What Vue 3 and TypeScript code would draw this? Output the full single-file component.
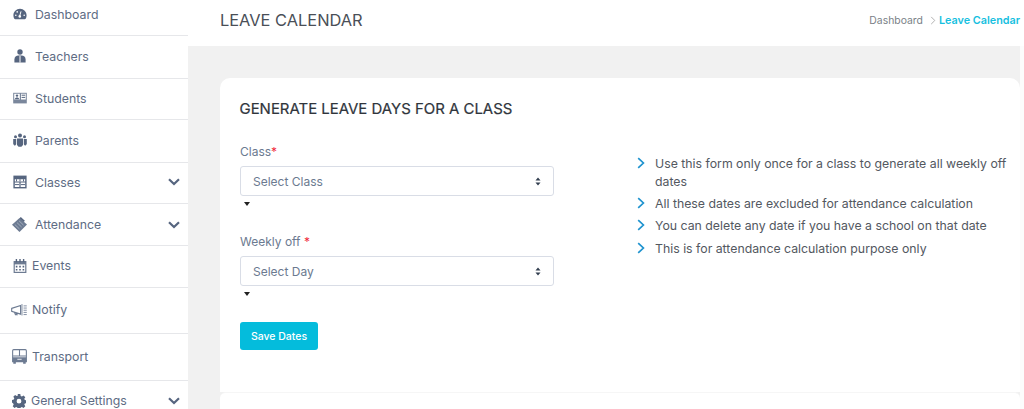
<script setup lang="ts">
interface NavItem { label: string; icon: string; h: number; size: number; left: number; gap: number; pb: number; chevron?: boolean }
const nav: NavItem[] = [
  { label: 'Dashboard', icon: 'gauge', h: 36, size: 14, left: 13, gap: 8, pb: 7 },
  { label: 'Teachers', icon: 'teacher', h: 43, size: 14, left: 13, gap: 8, pb: 2 },
  { label: 'Students', icon: 'card', h: 41, size: 14, left: 13, gap: 8, pb: 2 },
  { label: 'Parents', icon: 'users', h: 43, size: 14, left: 13, gap: 8, pb: 2 },
  { label: 'Classes', icon: 'table', h: 41, size: 14, left: 13, gap: 8, pb: 2, chevron: true },
  { label: 'Attendance', icon: 'tag', h: 42, size: 15, left: 12, gap: 8, pb: 0, chevron: true },
  { label: 'Events', icon: 'calendar', h: 42, size: 14, left: 13, gap: 5, pb: 2 },
  { label: 'Notify', icon: 'horn', h: 46, size: 16, left: 11, gap: 5, pb: 2 },
  { label: 'Transport', icon: 'bus', h: 47, size: 15, left: 12, gap: 5, pb: 2 },
  { label: 'General Settings', icon: 'gear', h: 42, size: 14, left: 12, gap: 5, pb: 2, chevron: true },
]
const notes = [
  'Use this form only once for a class to generate all weekly off dates',
  'All these dates are excluded for attendance calculation',
  'You can delete any date if you have a school on that date',
  'This is for attendance calculation purpose only',
]
</script>

<template>
  <div class="page">
    <aside class="sidebar">
      <div
        v-for="item in nav"
        :key="item.label"
        class="nav-row"
        :style="{ height: item.h + 'px', paddingLeft: item.left + 'px', paddingBottom: item.pb + 'px', gap: item.gap + 'px' }"
      >
        <svg class="nav-icon" :style="{ width: item.size + 'px', height: item.size + 'px' }" viewBox="0 0 14 14" fill="#56657f">
          <template v-if="item.icon === 'gauge'">
            <path d="M7 1.8C3.3 1.8.4 4.8.4 8.4c0 1.2.3 2.3.9 3.3.2.3.5.5.9.5h9.6c.4 0 .7-.2.9-.5.6-1 .9-2.1.9-3.3 0-3.6-2.9-6.6-6.6-6.6z" />
            <path d="M8 4.4 6.8 8.6" stroke="#fff" stroke-width="1" />
            <circle cx="6.8" cy="9.4" r="1.3" fill="#fff" />
            <circle cx="2.8" cy="8.2" r=".8" fill="#fff" /><circle cx="4.2" cy="4.9" r=".8" fill="#fff" /><circle cx="11.2" cy="8.2" r=".8" fill="#fff" />
          </template>
          <template v-else-if="item.icon === 'teacher'">
            <circle cx="7" cy="3" r="2.7" />
            <path d="M1.4 13.6v-3C1.4 8.2 3.2 6.6 5.4 6.6h3.2c2.2 0 4 1.6 4 4v3z" />
            <path d="M7 7v6.6" stroke="#fff" stroke-width="1" />
          </template>
          <template v-else-if="item.icon === 'card'">
            <path d="M.2 1.8h13.6v10.6H.2z" fill="#7a879c" />
            <path d="M1.2 2.8h5.6v5.6H1.2zM8 2.8h4.8v5.6H8z" fill="#fff" />
            <circle cx="4" cy="4.6" r="1.2" /><path d="M1.8 8.2c0-2.4 4.4-2.4 4.4 0z" />
            <path d="M8.6 4.2h3.6M8.6 6.4h3.6" stroke="#56657f" stroke-width="1" />
          </template>
          <template v-else-if="item.icon === 'users'">
            <circle cx="7" cy="2.6" r="2" /><circle cx="2.5" cy="3.8" r="1.5" /><circle cx="11.5" cy="3.8" r="1.5" />
            <path d="M4 5.6h6v6.4l-1.6 1.8H5.6L4 12z" />
            <path d="M.2 6h3v5.2l-1 1.2h-.9L.2 11zM10.8 6h3v5l-1.1 1.4h-.9l-1-1.2z" />
          </template>
          <template v-else-if="item.icon === 'table'">
            <path d="M.4.6h13.2v12.8H.4z" />
            <path d="M1.8 4.2h10.4v2.2H1.8zM1.8 7.6h4.6v4.4H1.8zM7.6 7.6h4.6v4.4H7.6z" fill="#fff" />
            <path d="M2 9.6h4.2M7.8 9.6H12" stroke="#56657f" stroke-width="1" />
            <path d="M3.5 4.2v2.2M7 4.2v2.2M10.5 4.2v2.2" stroke="#56657f" stroke-width="1" />
          </template>
          <template v-else-if="item.icon === 'tag'">
            <path d="M0 7.2 7 .9l7 6.2-7 6.9z" fill="#6d7b92" />
            <path d="M8.2 0l3.8 3.4-1.1 1.2L7 1.2z" fill="#56657f" />
            <path d="M2.6 7l4.4 4.2M4.6 5.2 9 9.4M6.6 3.6l4.2 4" stroke="#b4bdca" stroke-width=".7" />
          </template>
          <template v-else-if="item.icon === 'calendar'">
            <path d="M.6 2h12.8v12H.6z" fill="#6d7b92" />
            <path d="M1.8 5.4h10.4v7.4H1.8z" fill="#fff" />
            <path d="M3.4 0v3.2M7 0v3.2M10.6 0v3.2" stroke="#56657f" stroke-width="1.4" />
            <path d="M2.8 6.8h1.6v1.6H2.8zM6.2 6.8h1.6v1.6H6.2zM9.6 6.8h1.6v1.6H9.6zM2.8 10h1.6v1.6H2.8zM6.2 10h1.6v1.6H6.2zM9.6 10h1.6v1.6H9.6z" />
          </template>
          <template v-else-if="item.icon === 'horn'">
            <path d="M.6 5.6 8.4 3v7.6L.6 8.2zM3 8.8l.9 2.4h1.4L4.6 9.4" fill="none" stroke="#6d7b92" stroke-width="1" />
            <path d="M9.6 1.8v10M11 3.4h2.8M11 5.3h2.8M11 7.2h2.8M11 9.1h2.8M11 11h2.8" stroke="#7a879c" stroke-width=".8" fill="none" />
          </template>
          <template v-else-if="item.icon === 'bus'">
            <path d="M1.6.6h10.8c.6 0 1 .4 1 1v10.2H.6V1.6c0-.6.4-1 1-1z" fill="none" stroke="#6d7b92" stroke-width="1" />
            <path d="M7 1v5.6M1 6.6h12" stroke="#6d7b92" stroke-width="1" />
            <path d="M.6 7.6h12.8v4.2H.6zM1.2 11.8h2.4v2H1.2zM10.4 11.8h2.4v2h-2.4z" fill="#6d7b92" />
            <path d="M5 9.6h4" stroke="#fff" stroke-width=".8" />
          </template>
          <template v-else-if="item.icon === 'gear'">
            <path fill-rule="evenodd" d="M5.7 0h2.6l.4 1.9 1.2.5 1.6-1 1.8 1.8-1 1.6.5 1.2 1.9.4v2.6l-1.9.4-.5 1.2 1 1.6-1.8 1.8-1.6-1-1.2.5-.4 1.9H5.7l-.4-1.9-1.2-.5-1.6 1-1.8-1.8 1-1.6-.5-1.2L-.1 8.5V5.9l1.9-.4.5-1.2-1-1.6 1.8-1.8 1.6 1 1.2-.5zM7 4.8a2.4 2.4 0 1 0 0 4.8 2.4 2.4 0 0 0 0-4.8z" />
          </template>
        </svg>
        <span class="nav-label">{{ item.label }}</span>
        <svg v-if="item.chevron" class="chev" viewBox="0 0 12 8" fill="none" stroke="#56657f" stroke-width="2.2">
          <path d="M1 1.2 6 6l5-4.8" />
        </svg>
      </div>
    </aside>

    <main class="main">
      <header class="topbar">
        <h1 class="title">LEAVE CALENDAR</h1>
        <nav class="crumbs">
          <span>Dashboard</span>
          <svg class="crumb-sep" viewBox="0 0 6 10" fill="none" stroke="#a8a8a8" stroke-width="1"><path d="M1 1l4 4-4 4" /></svg>
          <b>Leave Calendar</b>
        </nav>
      </header>

      <div class="content">
        <section class="card">
          <h2 class="card-title">GENERATE LEAVE DAYS FOR A CLASS</h2>
          <div class="columns">
            <form class="form" @submit.prevent>
              <label class="field-label">Class<em>*</em></label>
              <div class="select">
                <span>Select Class</span>
                <svg class="updown" viewBox="0 0 6 10" fill="#333f50"><path d="M3 .5 5.8 4H.2zM3 9.5.2 6h5.6z" /></svg>
              </div>
              <i class="caret"></i>

              <label class="field-label second">Weekly off <em>*</em></label>
              <div class="select">
                <span>Select Day</span>
                <svg class="updown" viewBox="0 0 6 10" fill="#333f50"><path d="M3 .5 5.8 4H.2zM3 9.5.2 6h5.6z" /></svg>
              </div>
              <i class="caret"></i>

              <button class="save" type="button">Save Dates</button>
            </form>

            <ul class="notes">
              <li v-for="n in notes" :key="n">
                <svg class="note-chev" viewBox="0 0 8 12" fill="none" stroke="#1f93cf" stroke-width="1.7"><path d="M1.2 1.2 6.4 6l-5.2 4.8" /></svg>
                <span>{{ n }}</span>
              </li>
            </ul>
          </div>
        </section>
        <div class="next-card"></div>
      </div>
    </main>
  </div>
</template>

<style>
html, body { margin: 0; background: #fff; overflow: hidden; }
</style>

<style scoped>
.page {
  display: flex;
  width: 1024px;
  height: 409px;
  overflow: hidden;
  font-family: "Inter", "Open Sans", sans-serif;
}
.sidebar { width: 188px; flex: none; background: #fff; }
.nav-row {
  display: flex;
  align-items: center;
  box-sizing: border-box;
  border-bottom: 1px solid #e6e7ea;
  padding-right: 8px;
}
.nav-icon { flex: none; }
.nav-label { font-size: 12.3px; color: #5e6c84; flex: 1; }
.chev { width: 12px; height: 8px; flex: none; }
.main { flex: 1; display: flex; flex-direction: column; background: #fcfcfc; min-width: 0; }
.topbar {
  height: 46px;
  flex: none;
  background: #fff;
  display: flex;
  align-items: center;
  justify-content: space-between;
  padding: 0 4px 6px 32px;
  box-sizing: border-box;
}
.title { margin: 0; font-size: 16.4px; font-weight: 400; color: #4a4f57; }
.crumbs { display: flex; align-items: center; font-size: 10.4px; color: #7a7f87; }
.crumb-sep { width: 6px; height: 9px; margin: 0 3px 0 7px; }
.crumbs b { color: #17bfe0; font-weight: 600; font-size: 10.8px; }
.content { flex: 1; margin-right: 4px; padding: 32px 0 0 32px; min-height: 0; background: #f1f1f1; }
.card {
  background: #fff;
  border-radius: 10px 10px 0 0;
  height: 314px;
  box-sizing: border-box;
  padding: 22px 0 0 20px;
}
.card-title { margin: 0 0 0 -0.5px; font-size: 14.95px; font-weight: 400; color: #30353c; line-height: 18px; -webkit-text-stroke: .2px #30353c; }
.columns { display: flex; }
.form { width: 314px; flex: none; padding-top: 26px; display: flex; flex-direction: column; align-items: flex-start; }
.field-label { font-size: 12px; color: #6b7a90; line-height: 16px; }
.field-label.second { margin-top: 28px; }
.field-label em { color: #f02b3c; font-style: normal; }
.select {
  width: 100%;
  height: 30px;
  margin-top: 6px;
  box-sizing: border-box;
  border: 1px solid #d9dde6;
  border-radius: 3px;
  background: #fff;
  display: flex;
  align-items: center;
  justify-content: space-between;
  padding: 0 12px;
  font-size: 12px;
  color: #6b7a90;
}
.updown { width: 6px; height: 9px; }
.caret {
  display: block;
  width: 0;
  height: 0;
  margin: 6px 0 0 4px;
  border-left: 3px solid transparent;
  border-right: 3px solid transparent;
  border-top: 4px solid #222;
}
.save {
  margin-top: 26px;
  width: 78px;
  height: 28px;
  border: 0;
  border-radius: 3px;
  background: #04bcdc;
  color: #fff;
  font: 500 10.5px "Inter", sans-serif;
  padding: 0;
}
.notes { list-style: none; margin: 0 0 0 83px; padding: 37px 0 0; width: 375px; flex: none; box-sizing: border-box; }
.notes li { display: flex; gap: 10px; font-size: 12.3px; line-height: 18px; color: #53585f; margin-bottom: 4.2px; }
.note-chev { width: 8px; height: 12px; flex: none; margin-top: 2px; }
.next-card { height: 20px; background: #fff; border-top: 1px solid #f6f6f6; border-radius: 6px 6px 0 0; box-sizing: border-box; }
</style>
